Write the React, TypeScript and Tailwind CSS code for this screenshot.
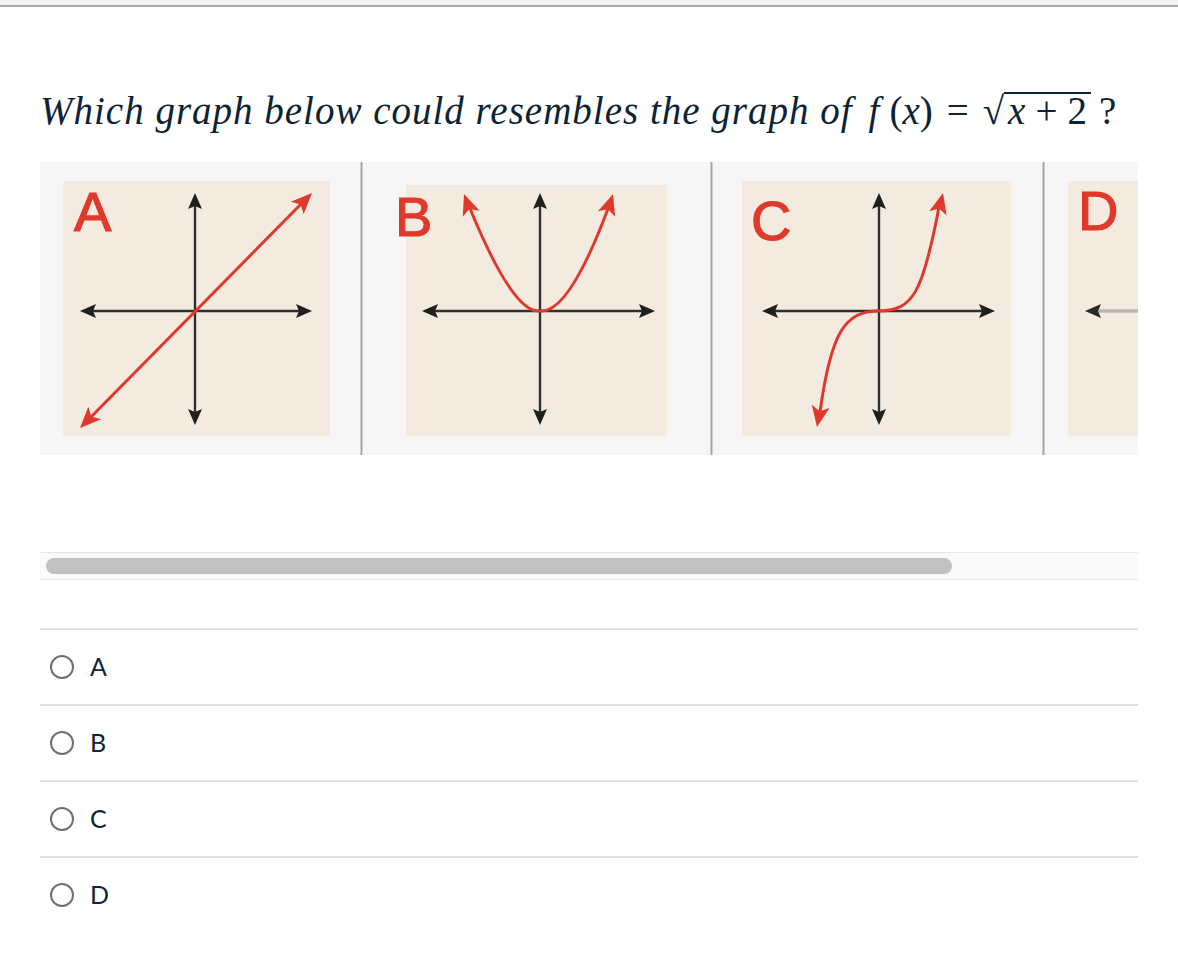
import React from "react";

const RED = "#e0392b";
const AX = "#2f2f2f";

function Axes({ cx, cy, l, r, t, b }: { cx: number; cy: number; l: number; r: number; t: number; b: number }) {
  return (
    <g>
      <line x1={l + 6} y1={cy} x2={r - 6} y2={cy} stroke={AX} strokeWidth={2.4} />
      <line x1={cx} y1={t + 6} x2={cx} y2={b - 6} stroke={AX} strokeWidth={2.4} />
      <polygon points={`${l},${cy} ${l + 16},${cy - 7} ${l + 13},${cy} ${l + 16},${cy + 7}`} fill="#1f1f1f" />
      <polygon points={`${r},${cy} ${r - 16},${cy - 7} ${r - 13},${cy} ${r - 16},${cy + 7}`} fill="#1f1f1f" />
      <polygon points={`${cx},${t} ${cx - 7},${t + 16} ${cx},${t + 13} ${cx + 7},${t + 16}`} fill="#1f1f1f" />
      <polygon points={`${cx},${b} ${cx - 7},${b - 16} ${cx},${b - 13} ${cx + 7},${b - 16}`} fill="#1f1f1f" />
    </g>
  );
}

function Arrow({ x, y, angle }: { x: number; y: number; angle: number }) {
  return (
    <polygon
      points="0,0 -21,-9 -16,0 -21,9"
      fill={RED}
      transform={`translate(${x} ${y}) rotate(${angle})`}
    />
  );
}

function Letter({ x, y, ch }: { x: number; y: number; ch: string }) {
  return (
    <text
      x={x}
      y={y}
      fill={RED}
      stroke={RED}
      strokeWidth={1.2}
      fontSize={56}
      fontFamily="'Liberation Sans', Arial, sans-serif"
    >
      {ch}
    </text>
  );
}

function PanelA() {
  return (
    <svg width={320} height={293} className="block shrink-0">
      <rect x={23} y={19} width={267} height={255} fill="#f3ebe0" />
      <Axes cx={155} cy={149} l={40} r={272} t={31} b={263} />
      <line x1={50} y1={256} x2={262} y2={41} stroke={RED} strokeWidth={3} />
      <Arrow x={272} y={31} angle={-45.4} />
      <Arrow x={40} y={266} angle={134.6} />
      <Letter x={34} y={69} ch="A" />
    </svg>
  );
}

function PanelB() {
  return (
    <svg width={347} height={293} className="block shrink-0">
      <rect x={43} y={23} width={261} height={251} fill="#f3ebe0" />
      <Axes cx={177} cy={149} l={59} r={292} t={31} b={263} />
      <path d="M 106 44 Q 150 152 177 149 Q 206 152 246 44" fill="none" stroke={RED} strokeWidth={3} />
      <Arrow x={101} y={32} angle={-110} />
      <Arrow x={250} y={32} angle={-72} />
      <Letter x={32} y={74} ch="B" />
    </svg>
  );
}

function PanelC() {
  return (
    <svg width={329} height={293} className="block shrink-0">
      <rect x={29} y={19} width={269} height={255} fill="#f3ebe0" />
      <Axes cx={166} cy={149} l={49} r={282} t={31} b={263} />
      <path d="M 226 45 C 210 130 200 149 166 149 C 132 149 118 170 107 250" fill="none" stroke={RED} strokeWidth={3} />
      <Arrow x={230} y={31} angle={-76} />
      <Arrow x={104} y={265} angle={100} />
      <Letter x={38} y={78} ch="C" />
    </svg>
  );
}

function PanelD() {
  return (
    <svg width={93} height={293} className="block shrink-0">
      <rect x={23} y={19} width={70} height={255} fill="#f3ebe0" />
      <line x1={50} y1={149} x2={93} y2={149} stroke="#b8b8ae" strokeWidth={3.5} />
      <polygon points="40,149 56,142 53,149 56,156" fill="#2a2a2a" />
      <Letter x={33} y={68} ch="D" />
    </svg>
  );
}

function Sep() {
  return <div className="w-[3px] shrink-0 self-stretch bg-[#a3a3a3] border-x border-[#cfcfcf]" />;
}

export default function App() {
  const options = ["A", "B", "C", "D"];
  return (
    <div className="min-h-[974px] w-[1178px] bg-white">
      <div className="h-[5px] bg-[#f2f2f2]" />
      <div className="h-[2px] bg-[#a8a8a8]" />
      <div className="px-[40px]">
        <div
          className="mt-[84px] h-[40px] flex items-baseline whitespace-nowrap text-[39px] leading-[40px] text-[#0d2334]"
          style={{ fontFamily: "'Liberation Serif', 'Times New Roman', serif" }}
        >
          <span className="italic tracking-[1px]">Which graph below could resembles the graph of</span>
          <span className="italic ml-[16px]">f</span>
          <span className="ml-[10px]">(</span>
          <span className="italic">x</span>
          <span>)</span>
          <span className="ml-[14px]">=</span>
          <span className="ml-[14px]">√</span>
          <span className="border-t-[2px] border-[#0d2334] leading-[34px] px-[4px]">
            <span className="italic">x</span>
            <span className="ml-[10px]">+</span>
            <span className="ml-[10px]">2</span>
          </span>
          <span className="ml-[8px]">?</span>
        </div>

        <div className="mt-[31px] flex h-[293px] w-[1098px] overflow-hidden bg-[#f6f6f6]">
          <PanelA />
          <Sep />
          <PanelB />
          <Sep />
          <PanelC />
          <Sep />
          <PanelD />
        </div>

        <div className="mt-[97px] h-[28px] w-[1098px] border-y border-[#e6e6e6] bg-[#fafafa] px-[6px] flex items-center">
          <div className="h-[16px] w-[906px] rounded-full bg-[#c1c1c1]" />
        </div>

        <div className="mt-[48px]">
          {options.map((o) => (
            <div key={o} className="flex h-[76px] items-center border-t-2 border-[#e0e0e0] pl-[10px]">
              <div className="h-[24px] w-[24px] rounded-full border-2 border-[#707070]" />
              <span
                className="ml-[16px] text-[25px] text-[#0f2537]"
                style={{ fontFamily: "Lato, 'Open Sans', sans-serif" }}
              >
                {o}
              </span>
            </div>
          ))}
        </div>
      </div>
    </div>
  );
}
